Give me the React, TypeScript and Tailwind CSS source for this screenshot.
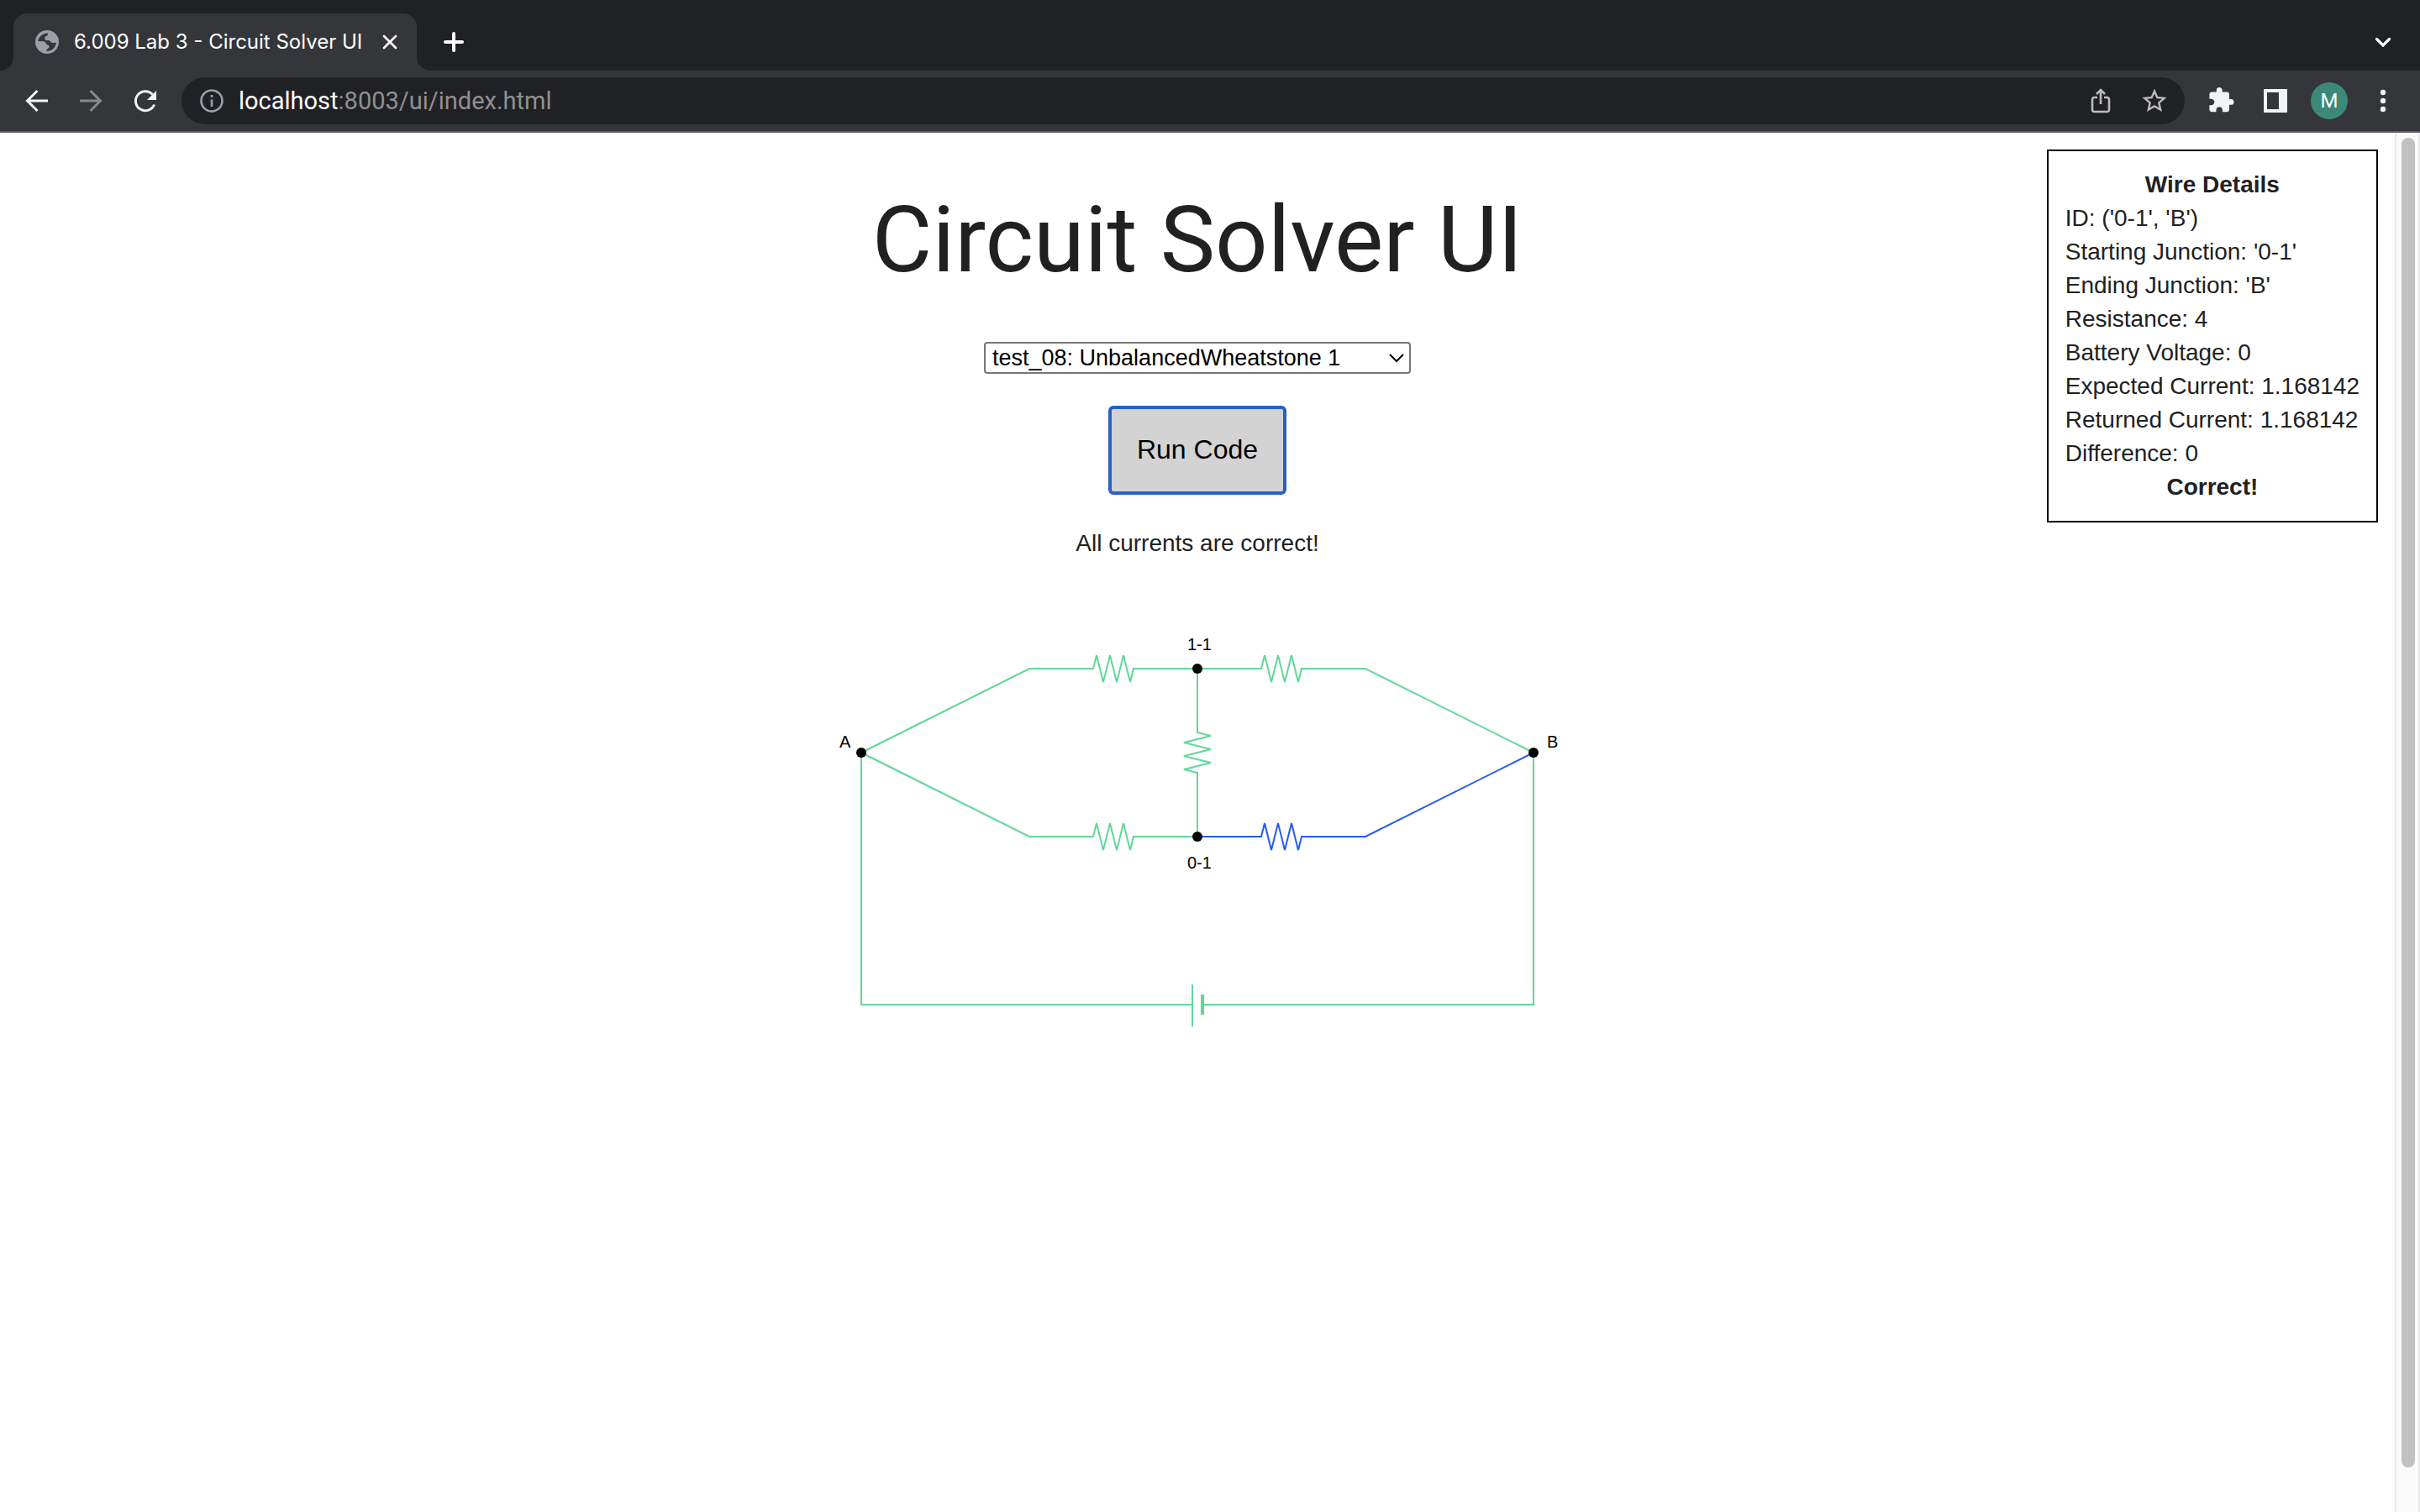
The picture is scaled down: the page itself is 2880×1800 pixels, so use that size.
import { useState } from "react";

const tests = ["test_08: UnbalancedWheatstone 1"];

const details = [
  "ID: ('0-1', 'B')",
  "Starting Junction: '0-1'",
  "Ending Junction: 'B'",
  "Resistance: 4",
  "Battery Voltage: 0",
  "Expected Current: 1.168142",
  "Returned Current: 1.168142",
  "Difference: 0",
];

function TabStrip() {
  return (
    <div className="flex h-[84px] items-end justify-between bg-[#202124] pr-7">
      <div className="flex items-end">
        <div className="size-4 bg-[#35363a]">
          <div className="size-4 rounded-br-2xl bg-[#202124]" />
        </div>
        <div className="flex h-[68px] w-[480px] items-center rounded-t-2xl bg-[#35363a] pr-5 pl-[26px] text-white">
          <svg viewBox="0 0 28 28" className="mr-[18px] size-7 shrink-0" aria-hidden="true">
            <circle cx="14" cy="14" r="14" fill="#9aa0a6" />
            <path
              d="M3.200 13C3.800 8 8.500 3.700 14.800 3.400C15.500 5 14.500 6.500 13 7C11.500 7.400 11.300 8.500 11.300 10C11.300 12 13.500 12 15.500 12C17.500 12 18 13.500 19 14.500C20.500 15.500 22.500 15 24.900 14.500C24.500 20.500 19.500 25 13.500 24.900C13 23.500 13.500 22.500 15 22C16.500 21.300 17 19.500 16 18C15 17 13 17.500 12.800 16C12.600 14 11 13.300 9 13.200Z"
              fill="#35363a"
            />
          </svg>
          <span className="flex-1 whitespace-nowrap">6.009 Lab 3 - Circuit Solver UI</span>
          <button aria-label="Close tab" className="flex size-6 items-center justify-center">
            <svg viewBox="0 0 24 24" className="size-6" stroke="currentColor" strokeWidth="2.600" strokeLinecap="round">
              <path d="M5 5l14 14M19 5L5 19" />
            </svg>
          </button>
        </div>
        <div className="size-4 bg-[#35363a]">
          <div className="size-4 rounded-bl-2xl bg-[#202124]" />
        </div>
        <button aria-label="New tab" className="ml-3 flex h-[68px] w-8 items-center justify-center text-white">
          <svg viewBox="0 0 24 24" className="size-6" stroke="currentColor" strokeWidth="4" strokeLinecap="round">
            <path d="M12 2v20M2 12h20" />
          </svg>
        </button>
      </div>
      <button aria-label="Search tabs" className="flex h-[68px] w-8 items-center justify-center text-white">
        <svg viewBox="0 0 32 32" className="size-8" fill="none" stroke="currentColor" strokeWidth="3.200" strokeLinecap="round">
          <path d="M8.500 12.500l7.500 7.500 7.500-7.500" />
        </svg>
      </button>
    </div>
  );
}

function Toolbar() {
  return (
    <div className="flex h-[74px] items-center border-b-2 border-[#5b5c60] bg-[#35363a] px-7 text-[#f1f3f4]">
      <button aria-label="Back" className="flex size-8 items-center justify-center">
        <svg viewBox="0 0 32 32" className="size-8" fill="none" stroke="currentColor" strokeWidth="3">
          <path d="M29 16H5M16.500 4L4.500 16l12 12" />
        </svg>
      </button>
      <button aria-label="Forward" className="ml-8 flex size-8 items-center justify-center text-[#87888a]">
        <svg viewBox="0 0 32 32" className="size-8" fill="none" stroke="currentColor" strokeWidth="3">
          <path d="M3 16h24M15.500 4l12 12-12 12" />
        </svg>
      </button>
      <button aria-label="Reload" className="ml-8 flex size-8 items-center justify-center">
        <svg viewBox="0 0 32 32" className="size-8" fill="none">
          <path d="M27.600 20.500A11.500 11.500 0 1 1 25.500 8.500" stroke="currentColor" strokeWidth="3" />
          <path d="M30 4v11H19z" fill="currentColor" />
        </svg>
      </button>
      <div className="ml-7 flex h-14 flex-1 items-center rounded-full bg-[#202124] pr-5 pl-[22px]">
        <svg viewBox="0 0 28 28" className="mr-[18px] size-7 shrink-0" fill="none" stroke="#9aa0a6" strokeWidth="2.600">
          <circle cx="14" cy="14" r="12.500" />
          <path d="M14 12.500V21M14 7v3" />
        </svg>
        <span className="flex-1 font-['Roboto','Inter',sans-serif] text-[29px] text-[#8f9093]">
          <span className="text-white">localhost</span>:8003/ui/index.html
        </span>
        <button aria-label="Share" className="mr-8 flex size-8 items-center justify-center text-[#bdbdbe]">
          <svg viewBox="0 0 32 32" className="size-8" fill="none" stroke="currentColor" strokeWidth="2.600">
            <path d="M12 12H8.500A2.500 2.500 0 0 0 6 14.500v12A2.500 2.500 0 0 0 8.500 29h15a2.500 2.500 0 0 0 2.500-2.500v-12a2.500 2.500 0 0 0-2.500-2.500H20M16 20V4M11 8l5-5 5 5" />
          </svg>
        </button>
        <button aria-label="Bookmark this page" className="flex size-8 items-center justify-center text-[#bdbdbe]">
          <svg viewBox="1 1 22 22" className="size-8" fill="currentColor">
            <path d="M22 9.240l-7.190-.620L12 2 9.190 8.630 2 9.240l5.460 4.730L5.820 21 12 17.270 18.180 21l-1.630-7.030L22 9.240zM12 15.400l-3.760 2.270 1-4.280-3.320-2.880 4.380-.380L12 6.100l1.710 4.040 4.380.380-3.320 2.880 1 4.280L12 15.400z" />
          </svg>
        </button>
      </div>
      <button aria-label="Extensions" className="ml-7 flex size-8 items-center justify-center">
        <svg viewBox="1 1 23 23" className="size-8" fill="currentColor">
          <path d="M20.500 11H19V7c0-1.100-.9-2-2-2h-4V3.500C13 2.120 11.880 1 10.500 1S8 2.120 8 3.500V5H4c-1.100 0-1.990.9-1.990 2v3.800H3.500c1.490 0 2.700 1.210 2.700 2.700s-1.210 2.700-2.700 2.700H2V20c0 1.100.9 2 2 2h3.800v-1.500c0-1.490 1.210-2.700 2.700-2.700 1.490 0 2.700 1.210 2.700 2.700V22H17c1.100 0 2-.9 2-2v-4h1.500c1.380 0 2.500-1.120 2.500-2.500S21.880 11 20.500 11z" />
        </svg>
      </button>
      <button aria-label="Side panel" className="ml-8 flex size-8 items-center justify-center">
        <svg viewBox="0 0 32 32" className="size-8" fill="currentColor" fillRule="evenodd">
          <path d="M2 2h28v28H2zM6 6v20h14V6z" />
        </svg>
      </button>
      <button
        aria-label="Profile"
        className="ml-[26px] flex size-11 items-center justify-center rounded-full bg-[#3c8879] font-['Roboto',sans-serif] text-2xl text-white"
      >
        M
      </button>
      <button aria-label="Menu" className="ml-[26px] flex size-8 items-center justify-center">
        <svg viewBox="0 0 32 32" className="size-8" fill="currentColor">
          <circle cx="16" cy="6" r="3.200" />
          <circle cx="16" cy="16" r="3.200" />
          <circle cx="16" cy="26" r="3.200" />
        </svg>
      </button>
    </div>
  );
}

function Circuit() {
  return (
    <svg
      viewBox="0 0 880 500"
      className="mt-[69px] block w-[880px] font-['Liberation_Sans',Arial,sans-serif] text-[20px]"
      fill="none"
      role="img"
      aria-label="Circuit diagram"
    >
      <g stroke="#62d799" strokeWidth="2">
        <path d="M40 160L240 60h76l4-16 8 32 8-32 8 32 8-32 8 32 4-16h76" />
        <path d="M440 60h76l4-16 8 32 8-32 8 32 8-32 8 32 4-16h76l200 100" />
        <path d="M40 160l200 100h76l4-16 8 32 8-32 8 32 8-32 8 32 4-16h76" />
        <path d="M440 60v76l16 4-32 8 32 8-32 8 32 8-32 8 16 4v76" />
        <path d="M40 160v300h394M434 436v50M448 460h392V160" />
        <path d="M446 448v24" strokeWidth="4" />
      </g>
      <path d="M440 260h76l4-16 8 32 8-32 8 32 8-32 8 32 4-16h76l200-100" stroke="#245bf5" strokeWidth="2" />
      <g fill="#000">
        <circle cx="40" cy="160" r="6" />
        <circle cx="440" cy="60" r="6" />
        <circle cx="440" cy="260" r="6" />
        <circle cx="840" cy="160" r="6" />
        <text x="14" y="154">A</text>
        <text x="856" y="154">B</text>
        <text x="428" y="38">1-1</text>
        <text x="428" y="298">0-1</text>
      </g>
    </svg>
  );
}

export default function App() {
  const [test, setTest] = useState(tests[0]);
  return (
    <div className="flex min-h-screen flex-col bg-white font-['Liberation_Sans',Arial,sans-serif] text-[#212121]">
      <header className="font-['Inter',sans-serif] text-2xl">
        <TabStrip />
        <Toolbar />
      </header>
      <div className="flex flex-1">
        <main className="relative flex flex-1 flex-col items-center">
          <h1 className="mt-[60px] font-['Roboto',sans-serif] text-[110px] leading-[136px]">Circuit Solver UI</h1>
          <div className="relative mt-[53px] w-[508px]">
            <select
              aria-label="Test case"
              value={test}
              onChange={(e) => setTest(e.target.value)}
              className="block h-[38px] w-full appearance-none rounded border-2 border-[#767676] bg-white px-2 text-[27px] leading-8 text-black"
            >
              {tests.map((t) => (
                <option key={t}>{t}</option>
              ))}
            </select>
            <svg
              viewBox="0 0 20 20"
              className="pointer-events-none absolute top-[9px] right-[7px] size-5"
              fill="none"
              stroke="#000"
              strokeWidth="2"
              aria-hidden="true"
            >
              <path d="M2 6l8 8 8-8" />
            </svg>
          </div>
          <button className="mt-[38px] h-[106px] w-[212px] rounded-md border-4 border-[#285fc9] bg-[#d3d3d3] pb-0.5 text-[32px] text-black">
            Run Code
          </button>
          <p className="mt-[38px] text-[28px] leading-10">All currents are correct!</p>
          <Circuit />
          <aside className="absolute top-5 right-5 border-2 border-black p-5 text-[28px] leading-10">
            <h2 className="text-center font-bold">Wire Details</h2>
            {details.map((line) => (
              <p key={line}>{line}</p>
            ))}
            <p className="text-center font-bold">Correct!</p>
          </aside>
        </main>
        <div className="flex w-[30px] flex-col border-x-2 border-[#e8e8e8] bg-[#fafafa] px-1.5 pt-1.5 pb-[53px]">
          <div className="w-4 flex-1 rounded-full bg-[#c1c1c1]" />
        </div>
      </div>
    </div>
  );
}
